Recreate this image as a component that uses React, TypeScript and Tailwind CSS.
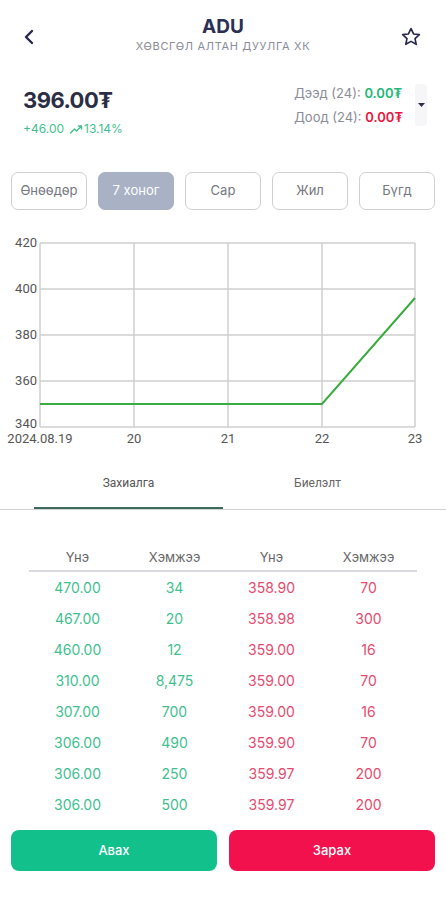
import { useState } from "react"

const periods = ["Өнөөдөр", "7 хоног", "Сар", "Жил", "Бүгд"]

const rows = [
    ["470.00", "34", "358.90", "70"],
    ["467.00", "20", "358.98", "300"],
    ["460.00", "12", "359.00", "16"],
    ["310.00", "8,475", "359.00", "70"],
    ["307.00", "700", "359.00", "16"],
    ["306.00", "490", "359.90", "70"],
    ["306.00", "250", "359.97", "200"],
    ["306.00", "500", "359.97", "200"],
]

function Chart() {
    const xs = [40, 134, 228, 322, 415]
    const ys = [243, 289, 335, 381, 427]
    const yLabels = ["420", "400", "380", "360", "340"]
    const xLabels = ["2024.08.19", "20", "21", "22", "23"]
    return (
        <svg width="446" height="215" viewBox="0 232 446 215" className="block">
            {xs.map((x) => (
                <line key={x} x1={x} y1={243} x2={x} y2={427} stroke="#cfcfcf" strokeWidth="1.5" />
            ))}
            {ys.map((y) => (
                <line key={y} x1={40} y1={y} x2={415} y2={y} stroke="#cfcfcf" strokeWidth="1.5" />
            ))}
            {ys.map((y, i) => (
                <text key={y} x={37} y={i === 4 ? y + 1 : y + 4} textAnchor="end" fontSize="13" fill="#555" fontFamily="Roboto, sans-serif">
                    {yLabels[i]}
                </text>
            ))}
            {xs.map((x, i) => (
                <text key={x} x={x} y={443} textAnchor="middle" fontSize="13" fill="#555" fontFamily="Roboto, sans-serif">
                    {xLabels[i]}
                </text>
            ))}
            <polyline points="40,404 322,404 415,298" fill="none" stroke="#3aab3f" strokeWidth="2" />
        </svg>
    )
}

export default function App() {
    const [period, setPeriod] = useState(1)
    const [tab, setTab] = useState(0)

    return (
        <div className="w-[446px] h-[900px] bg-white overflow-hidden" style={{ fontFamily: "Inter, 'Noto Sans', sans-serif" }}>
            {/* header */}
            <div className="flex items-center justify-between px-[22px] pt-[12px] h-[62px]">
                <div className="w-[26px] flex">
                    <svg width="14" height="16" viewBox="0 0 14 16" fill="none">
                        <path d="M10 2 L4 8 L10 14" stroke="#25284a" strokeWidth="2.4" strokeLinecap="round" strokeLinejoin="round" />
                    </svg>
                </div>
                <div className="flex flex-col items-center -mt-[6px]">
                    <span className="text-[19px] font-bold text-[#2b2e55] leading-[24px]">ADU</span>
                    <span className="text-[11px] text-[#8a8c98] tracking-[0.06em] leading-[14px]">ХӨВСГӨЛ АЛТАН ДУУЛГА ХК</span>
                </div>
                <div className="w-[26px] flex justify-end">
                    <svg width="22" height="22" viewBox="0 0 24 24" fill="none" className="mr-[2px]">
                        <path d="M12 2.8 L14.8 8.7 L21.1 9.4 L16.4 13.7 L17.7 20 L12 16.8 L6.3 20 L7.6 13.7 L2.9 9.4 L9.2 8.7 Z" stroke="#25284a" strokeWidth="1.8" strokeLinejoin="round" />
                    </svg>
                </div>
            </div>

            {/* price */}
            <div className="flex justify-between items-start pl-[23px] pr-[19px] pt-[24px] h-[110px]">
                <div className="flex flex-col">
                    <span className="text-[22px] font-bold text-[#2b2e45] leading-[28px] tracking-tight">396.00₮</span>
                    <div className="flex items-center gap-[5px] mt-[6px] text-[12px] text-[#3fbf8f]">
                        <span>+46.00</span>
                        <span className="flex items-center gap-[1px]">
                            <svg width="14" height="9" viewBox="0 0 13 9" fill="none">
                                <path d="M1 8 L5 4 L7 6 L12 1 M9 1 H12 V4" stroke="#3fbf8f" strokeWidth="1.4" strokeLinecap="round" strokeLinejoin="round" />
                            </svg>
                            13.14%
                        </span>
                    </div>
                </div>
                <div className="flex items-center gap-[12px] -mt-[2px]">
                    <div className="flex flex-col gap-[6px] text-[13px] leading-[18px]">
                        <div className="text-[#8a8c98]">
                            Дээд (24): <span className="text-[#22b877] font-semibold">0.00₮</span>
                        </div>
                        <div className="text-[#8a8c98]">
                            Доод (24): <span className="text-[#e8173f] font-semibold">0.00₮</span>
                        </div>
                    </div>
                    <div className="w-[12px] h-[42px] rounded bg-[#f6f6f8] flex items-center justify-center">
                        <svg width="7" height="4" viewBox="0 0 7 4">
                            <path d="M0 0 H7 L3.5 4 Z" fill="#2b2e45" />
                        </svg>
                    </div>
                </div>
            </div>

            {/* period buttons */}
            <div className="flex gap-[11px] px-[11px]">
                {periods.map((p, i) => (
                    <button
                        key={p}
                        onClick={() => setPeriod(i)}
                        className={`w-[76px] h-[38px] rounded-[7px] text-[13px] ${period === i ? "bg-[#a9b1c4] text-white border border-[#a9b1c4]" : "bg-white text-[#75777f] border border-[#cfd0d4]"}`}
                    >
                        {p}
                    </button>
                ))}
            </div>

            {/* chart */}
            <div className="mt-[22px]">
                <Chart />
            </div>

            {/* tabs */}
            <div className="flex mt-[20px] h-[43px] border-b border-[#cfd3d2] px-[34px]">
                {["Захиалга", "Биелэлт"].map((t, i) => (
                    <button
                        key={t}
                        onClick={() => setTab(i)}
                        className={`w-[190px] h-full flex items-start justify-center pt-[7px] text-[12px] ${i === 0 ? "text-[#555]" : "text-[#666]"} ${tab === i ? "border-b-2 border-[#3d6b5a] -mb-[1px]" : ""}`}
                        style={{ fontFamily: "Roboto, sans-serif" }}
                    >
                        {t}
                    </button>
                ))}
            </div>

            {/* order book */}
            <div className="px-[29px] mt-[37px]">
                <div className="grid grid-cols-4 text-center text-[13px] text-[#666] pb-[3px] border-b-2 border-[#d9dbe0] leading-[20px]">
                    <span>Үнэ</span>
                    <span>Хэмжээ</span>
                    <span>Үнэ</span>
                    <span>Хэмжээ</span>
                </div>
                <div className="flex flex-col">
                    {rows.map((r, i) => (
                        <div key={i} className="grid grid-cols-4 text-center text-[14px] h-[31px] items-center">
                            <span className="text-[#3fbf8f]">{r[0]}</span>
                            <span className="text-[#3fbf8f]">{r[1]}</span>
                            <span className="text-[#e84a6e]">{r[2]}</span>
                            <span className="text-[#e84a6e]">{r[3]}</span>
                        </div>
                    ))}
                </div>
            </div>

            {/* actions */}
            <div className="flex gap-[12px] px-[11px] mt-[10px]">
                <button className="flex-1 h-[41px] rounded-[8px] bg-[#12c08c] text-white text-[13px] font-medium">Авах</button>
                <button className="flex-1 h-[41px] rounded-[8px] bg-[#f2114d] text-white text-[13px] font-medium">Зарах</button>
            </div>
        </div>
    )
}
